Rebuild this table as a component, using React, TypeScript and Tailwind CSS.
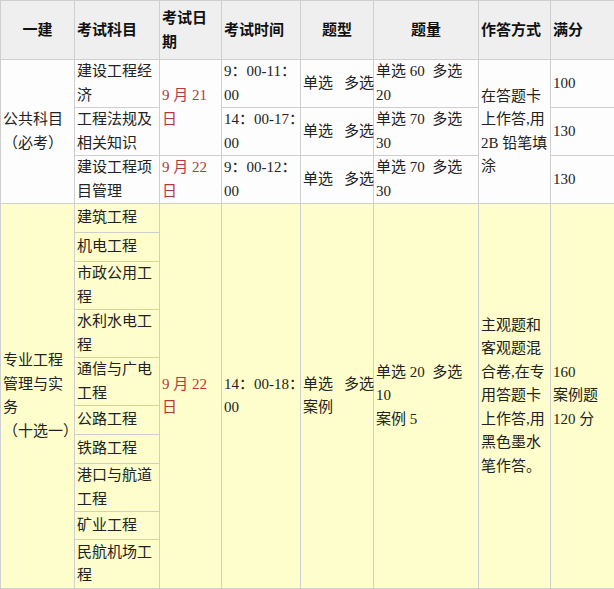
import React from 'react';

const td = 'border border-[#cfcfcf] px-[2px] py-0 align-middle text-left leading-[23.5px] whitespace-nowrap';
const th = 'border border-[#cfcfcf] px-[2px] py-0 align-middle leading-[24px] font-bold text-[#111] whitespace-nowrap';
const red = 'text-[#b23a3a]';

function Pair({ a, b }: { a: string; b: string }) {
  return (
    <>
      {a}
      <span className="inline-block w-[11px]" />
      {b}
    </>
  );
}

export default function App() {
  const pro = [
    { name: ['建筑工程'], h: 'h-[29px]' },
    { name: ['机电工程'], h: 'h-[29px]' },
    { name: ['市政公用工', '程'], h: 'h-[48px]' },
    { name: ['水利水电工', '程'], h: 'h-[48px]' },
    { name: ['通信与广电', '工程'], h: 'h-[48px]' },
    { name: ['公路工程'], h: 'h-[29px]' },
    { name: ['铁路工程'], h: 'h-[29px]' },
    { name: ['港口与航道', '工程'], h: 'h-[48px]' },
    { name: ['矿业工程'], h: 'h-[28px]' },
    { name: ['民航机场工', '程'], h: 'h-[49px]' },
  ];

  return (
    <div className="w-[614px] bg-white font-['Liberation_Serif','Noto_Sans_CJK_SC',serif] text-[15px] text-[#222]">
      <table className="w-[614px] table-fixed border-collapse">
        <colgroup>
          <col className="w-[74px]" />
          <col className="w-[85px]" />
          <col className="w-[62px]" />
          <col className="w-[79px]" />
          <col className="w-[73px]" />
          <col className="w-[105px]" />
          <col className="w-[72px]" />
          <col className="w-[64px]" />
        </colgroup>
        <thead>
          <tr className="h-[59px] bg-[#efefef]">
            <th className={`${th} text-center`}>一建</th>
            <th className={`${th} text-left`}>考试科目</th>
            <th className={`${th} text-left`}>
              考试日<br />期
            </th>
            <th className={`${th} text-left`}>考试时间</th>
            <th className={`${th} text-center`}>题型</th>
            <th className={`${th} text-center`}>题量</th>
            <th className={`${th} text-left`}>作答方式</th>
            <th className={`${th} text-left`}>满分</th>
          </tr>
        </thead>
        <tbody>
          {/* 公共科目 */}
          <tr className="h-[47px] bg-[#fdfdfd]">
            <td rowSpan={3} className={td}>
              公共科目<br />（必考）
            </td>
            <td className={td}>
              建设工程经<br />济
            </td>
            <td rowSpan={2} className={`${td} ${red}`}>
              9 月 21<br />日
            </td>
            <td className={td}>
              9：00-11：<br />00
            </td>
            <td className={td}>
              <Pair a="单选" b="多选" />
            </td>
            <td className={td}>
              单选 60 &nbsp;多选<br />20
            </td>
            <td rowSpan={3} className={td}>
              在答题卡<br />上作答,用<br />2B 铅笔填<br />涂
            </td>
            <td className={td}>100</td>
          </tr>
          <tr className="h-[48px] bg-[#fdfdfd]">
            <td className={td}>
              工程法规及<br />相关知识
            </td>
            <td className={td}>
              14：00-17：<br />00
            </td>
            <td className={td}>
              <Pair a="单选" b="多选" />
            </td>
            <td className={td}>
              单选 70 &nbsp;多选<br />30
            </td>
            <td className={td}>130</td>
          </tr>
          <tr className="h-[47px] bg-[#fdfdfd]">
            <td className={td}>
              建设工程项<br />目管理
            </td>
            <td className={`${td} ${red}`}>
              9 月 22<br />日
            </td>
            <td className={td}>
              9：00-12：<br />00
            </td>
            <td className={td}>
              <Pair a="单选" b="多选" />
            </td>
            <td className={td}>
              单选 70 &nbsp;多选<br />30
            </td>
            <td className={td}>130</td>
          </tr>

          {/* 专业工程 */}
          {pro.map((p, i) => (
            <tr key={i} className={`${p.h} bg-[#fefdcc]`}>
              {i === 0 && (
                <td rowSpan={10} className={td}>
                  专业工程<br />管理与实<br />务<br />（十选一）
                </td>
              )}
              <td className={td}>
                {p.name.map((n, j) => (
                  <React.Fragment key={j}>
                    {j > 0 && <br />}
                    {n}
                  </React.Fragment>
                ))}
              </td>
              {i === 0 && (
                <>
                  <td rowSpan={10} className={`${td} ${red}`}>
                    9 月 22<br />日
                  </td>
                  <td rowSpan={10} className={td}>
                    14：00-18：<br />00
                  </td>
                  <td rowSpan={10} className={td}>
                    <Pair a="单选" b="多选" />
                    <br />案例
                  </td>
                  <td rowSpan={10} className={td}>
                    单选 20 &nbsp;多选<br />10<br />案例 5
                  </td>
                  <td rowSpan={10} className={td}>
                    主观题和<br />客观题混<br />合卷,在专<br />用答题卡<br />上作答,用<br />黑色墨水<br />笔作答。
                  </td>
                  <td rowSpan={10} className={td}>
                    160<br />案例题<br />120 分
                  </td>
                </>
              )}
            </tr>
          ))}
        </tbody>
      </table>
    </div>
  );
}
